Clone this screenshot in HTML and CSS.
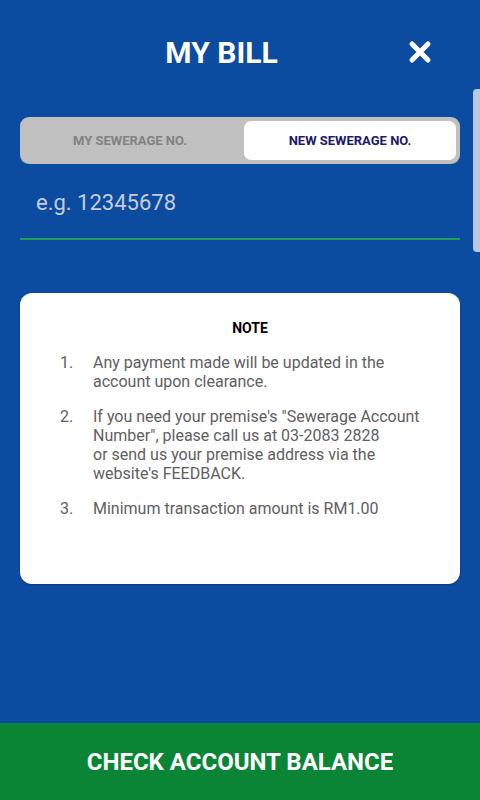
FILE: index.html
```html
<!DOCTYPE html>
<html>
<head>
  <meta charset="UTF-8">
  <title>My Bill</title>
  <link rel="stylesheet" href="styles.css">
</head>
<body>
  <div class="page">
    <div class="header">
      <h1 class="title">MY BILL</h1>
      <button class="close" aria-label="Close">
        <svg width="24" height="24" viewBox="0 0 24 24">
          <path d="M4 4 L20 20 M20 4 L4 20" stroke="#fff" stroke-width="5" stroke-linecap="round" fill="none"/>
        </svg>
      </button>
    </div>

    <div class="tabs">
      <div class="tab">MY SEWERAGE NO.</div>
      <div class="tab active">NEW SEWERAGE NO.</div>
    </div>

    <input class="account-input" type="text" placeholder="e.g. 12345678">

    <div class="note-card">
      <div class="note-title">NOTE</div>
      <ol class="note-list">
        <li><span class="num">1.</span><span class="txt">Any payment made will be updated in the account upon clearance.</span></li>
        <li><span class="num">2.</span><span class="txt">If you need your premise's "Sewerage Account Number", please call us at 03-2083 2828<br>or send us your premise address via the website's FEEDBACK.</span></li>
        <li><span class="num">3.</span><span class="txt">Minimum transaction amount is RM1.00</span></li>
      </ol>
    </div>

    <button class="check-btn">CHECK ACCOUNT BALANCE</button>

    <div class="scroll-thumb"></div>
  </div>
</body>
</html>
```

FILE: styles.css
```css
* { box-sizing: border-box; }
html, body { margin: 0; padding: 0; }
body { font-family: Roboto, "Liberation Sans", sans-serif; background: #0c4ca0; }

.page { position: relative; min-height: 800px; display: flex; flex-direction: column; }

.header { display: flex; align-items: center; padding: 35px 48px 0 35px; }
.title { flex: 1; margin: 0; text-align: center; color: #fff; font-size: 30px; font-weight: 700; line-height: 36px; }
.close { width: 24px; height: 24px; padding: 0; border: 0; background: none; margin-top: -2px; }
.close svg { display: block; }

.tabs { display: grid; grid-template-columns: 1fr 1fr; gap: 8px; margin: 46px 20px 0; padding: 4px; height: 47px; background: #c0c0c0; border-radius: 9px; }
.tab { display: flex; align-items: center; justify-content: center; font-size: 13px; font-weight: 700; color: #828282; border-radius: 7px; }
.tab.active { background: #fff; color: #1b1a6b; }

.account-input { display: block; margin: 8px 20px 0; width: 440px; height: 68px; padding: 0 16px 6px; border: 0; border-bottom: 2px solid #1e9d5c; background: transparent; font-family: Roboto, "Liberation Sans", sans-serif; font-size: 22px; color: #fff; outline: none; }
.account-input::placeholder { color: #c6ccd8; }

.note-card { margin: 53px 20px 0; padding: 27px 30px 66px 40px; background: #fff; border-radius: 12px; box-shadow: 0 1px 2px rgba(0,0,0,0.25); }
.note-title { text-align: center; font-size: 14px; font-weight: 700; line-height: 16px; color: #000; margin-left: 10px; }
.note-list { list-style: none; margin: 17px 0 0; padding: 0; color: #606060; font-size: 16px; }
.note-list li { display: flex; margin-bottom: 16px; }
.note-list li:last-child { margin-bottom: 0; }
.num { width: 33px; flex-shrink: 0; }
.txt { flex: 1; }

.check-btn { margin-top: auto; height: 77px; border: 0; background: #0a8535; color: #fff; font-family: Roboto, "Liberation Sans", sans-serif; font-size: 24px; font-weight: 700; }

.scroll-thumb { position: absolute; right: 0; top: 89px; width: 7px; height: 163px; background: #b9c9e2; border-radius: 4px 0 0 4px; }
```
